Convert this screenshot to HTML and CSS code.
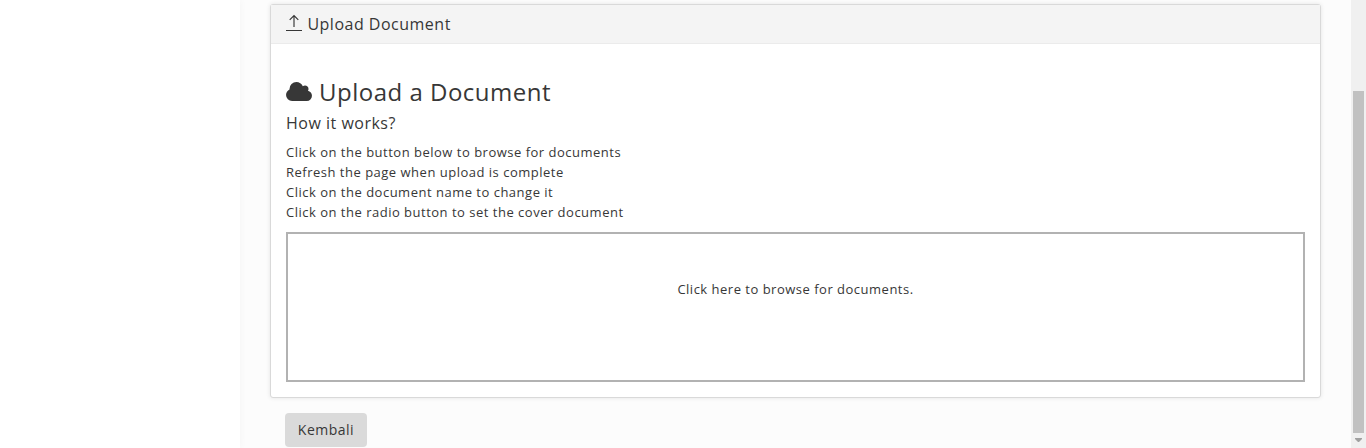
FILE: index.html
```html
<!DOCTYPE html>
<html lang="en">
<head>
<meta charset="utf-8">
<title>Upload Document</title>
<link rel="stylesheet" href="styles.css">
</head>
<body>
<div class="app">
  <aside class="sidebar"></aside>
  <main class="content">
    <section class="panel">
      <header class="panel-head">
        <svg class="icon-upload" width="16" height="17" viewBox="0 0 16 17"><path d="M0 16.500H16M8 1.500V13M3.700 5.800L8 1.500L12.300 5.800" fill="none" stroke="currentColor" stroke-width="1.150"/></svg>
        <span>Upload Document</span>
      </header>
      <div class="panel-body">
        <h3 class="title">
          <svg class="icon-cloud" width="26" height="19" viewBox="0 0 1920 1408"><path transform="translate(0 1408) scale(1 -1)" fill="currentColor" d="M1920 384q0-159-112.500-271.500t-271.500-112.500h-1088q-185 0-316.500 131.500t-131.500 316.500q0 132 71 241.500t187 163.500q-2 28-2 43q0 212 150 362t362 150q158 0 286.500-88t187.500-230q70 62 166 62q106 0 181-75t75-181q0-75-41-138q129-30 213-134.500t84-239.500z"/></svg>
          <span>Upload a Document</span>
        </h3>
        <h5 class="subtitle">How it works?</h5>
        <ul class="steps">
          <li>Click on the button below to browse for documents</li>
          <li>Refresh the page when upload is complete</li>
          <li>Click on the document name to change it</li>
          <li>Click on the radio button to set the cover document</li>
        </ul>
        <div class="dropzone">Click here to browse for documents.</div>
      </div>
    </section>
    <button class="back" type="button">Kembali</button>
  </main>
  <div class="scrollbar">
    <div class="thumb"></div>
    <svg class="arrow" width="7" height="4" viewBox="0 0 7 4"><path d="M0 0H7V1L4 4H3L0 1Z" fill="#a0a0a0"/></svg>
  </div>
</div>
</body>
</html>
```
FILE: styles.css
```css
* { box-sizing: border-box; }
body {
  margin: 0;
  height: 448px;
  overflow: hidden;
  background: #fcfcfc;
  color: #373737;
  font: 13px/20px "Open Sans", sans-serif;
  letter-spacing: 0.5px;
}
.app { display: flex; height: 448px; }
.sidebar { flex: 0 0 240px; background: #fff; box-shadow: 0 0 8px rgba(0, 0, 0, 0.04); }
.content { flex: 1; padding: 4px 30px 0; }
.panel {
  height: 394px;
  border: 1px solid #d9d9d9;
  border-radius: 3px;
  background: #fff;
  box-shadow: 0 0 4px rgba(0, 0, 0, 0.1);
}
.panel-head {
  display: flex;
  gap: 5.4px;
  height: 39px;
  padding: 0 15px;
  line-height: 38px;
  font-size: 16px;
  background: #f4f4f4;
  border-bottom: 1px solid #ebebeb;
}
.icon-upload { margin-top: 9px; }
.panel-body { padding: 33px 15px 0; }
.title { display: flex; gap: 7px; margin: 0; font-size: 24px; font-weight: 400; line-height: 30px; }
.icon-cloud { margin-top: 5px; }
.subtitle { margin: 5px 0 0; font-size: 16px; font-weight: 400; line-height: 22px; }
.steps { margin: 8px 0 10px; padding: 0; list-style: none; }
.dropzone { height: 150px; padding-top: 45px; border: 2px solid #b2b2b2; text-align: center; }
.back {
  display: block;
  width: 82px;
  height: 34px;
  margin: 15px 0 0 15px;
  padding: 0;
  border: 0;
  border-radius: 4px;
  background: #dadada;
  color: #373737;
  font: 14px/34px "Open Sans", sans-serif;
  letter-spacing: 0.5px;
}
.scrollbar { display: flex; flex: 0 0 15px; flex-direction: column; align-items: center; padding-top: 91px; background: #f0f0f0; }
.thumb { width: 11px; height: 342px; background: #c1c1c1; }
.arrow { margin-top: 5px; }
```
